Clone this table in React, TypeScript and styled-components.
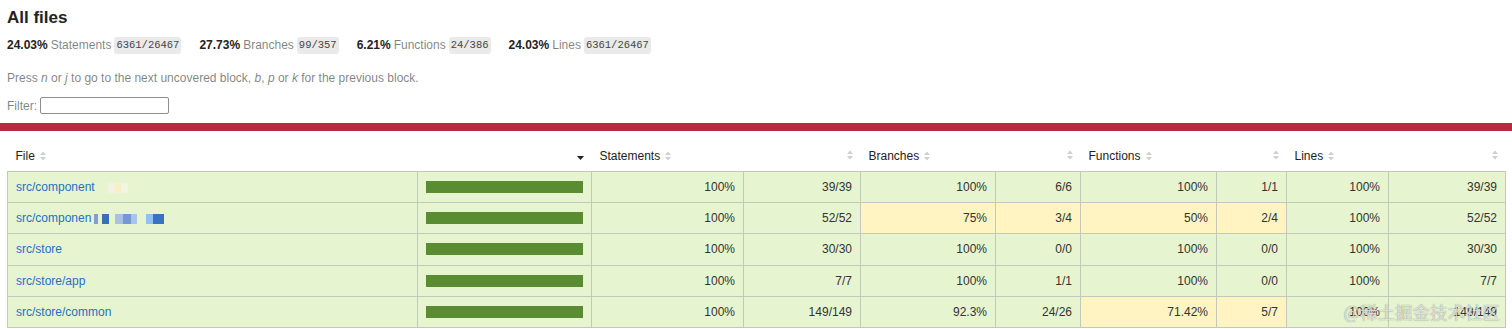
import styled, { createGlobalStyle } from 'styled-components';

const GlobalStyle = createGlobalStyle`
  html, body {
    margin: 0;
    background: #fff;
  }
  body {
    font-family: 'Liberation Sans', Arial, sans-serif;
    font-size: 12px;
    color: #333;
  }
`;

const Page = styled.div`
  position: relative;
  width: 1512px;
  height: 329px;
  overflow: hidden;
`;

const Intro = styled.div`
  padding: 8px 7px 0;
`;

const Title = styled.h1`
  margin: 0 0 9px;
  font-size: 17px;
  line-height: 20px;
  font-weight: bold;
  color: #222;
`;

const Summary = styled.div`
  display: flex;
  align-items: center;
  gap: 18px;
  height: 16px;
`;

const Stat = styled.div`
  display: flex;
  align-items: center;
  white-space: nowrap;
`;

const Strong = styled.span`
  font-weight: bold;
  color: #222;
  margin-right: 3px;
`;

const Quiet = styled.span`
  color: rgba(0, 0, 0, 0.5);
`;

const Fraction = styled.span`
  font-family: 'Liberation Mono', monospace;
  font-size: 10.5px;
  line-height: 13px;
  color: #444;
  background: #eaeaea;
  border-radius: 3px;
  padding: 2px;
  margin-left: 3px;
`;

const Help = styled.p`
  margin: 18px 0 0;
  line-height: 14px;
  color: rgba(0, 0, 0, 0.5);
`;

const FilterRow = styled.div`
  display: flex;
  align-items: center;
  gap: 3px;
  margin-top: 12px;
  height: 17px;
  color: rgba(0, 0, 0, 0.5);
`;

const FilterInput = styled.input`
  box-sizing: border-box;
  width: 129px;
  height: 17px;
  border: 1px solid #8e8e8e;
  border-radius: 2px;
  padding: 0 3px;
  background: #fff;
`;

const StatusLine = styled.div`
  margin-top: 9px;
  height: 8px;
  background: #b92a42;
`;

const TableWrap = styled.div`
  padding: 9px 7px 0;
`;

const Table = styled.table`
  width: 1498px;
  border-collapse: collapse;
  table-layout: fixed;
`;

const Th = styled.th<{ $align?: 'left' | 'right' }>`
  height: 31px;
  padding: 0 8px;
  font-weight: normal;
  color: #222;
  text-align: ${p => p.$align || 'left'};
  border-bottom: 1px solid #c2c8bb;
  white-space: nowrap;
`;

const HeadLabel = styled.span`
  display: inline-flex;
  align-items: center;
  gap: 5px;
  vertical-align: middle;
`;

const Td = styled.td<{ $tone: 'high' | 'medium'; $align?: 'left' | 'right' }>`
  height: 30.2px;
  padding: 0 8px;
  background: ${p => (p.$tone === 'high' ? '#e6f5d0' : '#fff4c2')};
  border: 1px solid #c2c8bb;
  text-align: ${p => p.$align || 'right'};
  color: #333;
  white-space: nowrap;
  overflow: hidden;
`;

const FileLink = styled.a`
  color: #1f6fc5;
  text-decoration: none;
`;

const Mosaic = styled.span`
  display: inline-flex;
  vertical-align: middle;
  height: 10px;
`;

const Tile = styled.span<{ $w: number; $c: string }>`
  width: ${p => p.$w}px;
  height: 10px;
  background: ${p => p.$c};
`;

const Cover = styled.div`
  height: 12px;
  background: #5a8c32;
`;

const Watermark = styled.div`
  position: absolute;
  right: 12px;
  top: 300px;
  font-family: 'Noto Sans CJK SC', sans-serif;
  font-size: 17.5px;
  line-height: 24px;
  color: rgba(255, 255, 255, 0.75);
  text-shadow: 0 0 1px rgba(0, 0, 0, 0.55);
  pointer-events: none;
`;

const SortIcon = () => (
  <svg width="6" height="10" viewBox="0 0 6 10">
    <path d="M0 4 L3 0.5 L6 4 Z M0 6 L3 9.5 L6 6 Z" fill="#cfcfcf" />
  </svg>
);

const SortedIcon = () => (
  <svg width="7" height="4" viewBox="0 0 7 4">
    <path d="M0 0 L7 0 L3.5 4 Z" fill="#222" />
  </svg>
);

type Tone = 'high' | 'medium';
type Metric = [string, string, Tone];

interface Row {
  file: string;
  mosaic?: [number, string][];
  s: Metric;
  b: Metric;
  f: Metric;
  l: Metric;
}

// blurred parts of the file names in the screenshot
const paleTiles: [number, string][] = [
  [13, 'transparent'],
  [7, '#f3f2e0'],
  [6, '#f8efc6'],
  [7, '#f1f5e2'],
];

const blueTiles: [number, string][] = [
  [3, 'transparent'],
  [4, '#7f9fcf'],
  [4, 'transparent'],
  [7, '#3d6fb6'],
  [6, 'transparent'],
  [8, '#a9c0e4'],
  [8, '#7598d4'],
  [6, '#a7c4ea'],
  [9, 'transparent'],
  [7, '#8ec3ee'],
  [11, '#3a72c2'],
];

const rows: Row[] = [
  {
    file: 'src/component',
    mosaic: paleTiles,
    s: ['100%', '39/39', 'high'],
    b: ['100%', '6/6', 'high'],
    f: ['100%', '1/1', 'high'],
    l: ['100%', '39/39', 'high'],
  },
  {
    file: 'src/componen',
    mosaic: blueTiles,
    s: ['100%', '52/52', 'high'],
    b: ['75%', '3/4', 'medium'],
    f: ['50%', '2/4', 'medium'],
    l: ['100%', '52/52', 'high'],
  },
  {
    file: 'src/store',
    s: ['100%', '30/30', 'high'],
    b: ['100%', '0/0', 'high'],
    f: ['100%', '0/0', 'high'],
    l: ['100%', '30/30', 'high'],
  },
  {
    file: 'src/store/app',
    s: ['100%', '7/7', 'high'],
    b: ['100%', '1/1', 'high'],
    f: ['100%', '0/0', 'high'],
    l: ['100%', '7/7', 'high'],
  },
  {
    file: 'src/store/common',
    s: ['100%', '149/149', 'high'],
    b: ['92.3%', '24/26', 'high'],
    f: ['71.42%', '5/7', 'medium'],
    l: ['100%', '149/149', 'high'],
  },
];

const colWidths = [410, 174, 152, 117, 135, 85, 136, 70, 102, 117];

const summary = [
  { pct: '24.03%', label: 'Statements', frac: '6361/26467' },
  { pct: '27.73%', label: 'Branches', frac: '99/357' },
  { pct: '6.21%', label: 'Functions', frac: '24/386' },
  { pct: '24.03%', label: 'Lines', frac: '6361/26467' },
];

const metricHeads = ['Statements', 'Branches', 'Functions', 'Lines'];

const MetricCells = ({ m }: { m: Metric }) => (
  <>
    <Td $tone={m[2]}>{m[0]}</Td>
    <Td $tone={m[2]}>{m[1]}</Td>
  </>
);

export default function App() {
  return (
    <Page>
      <GlobalStyle />
      <Intro>
        <Title>All files</Title>
        <Summary>
          {summary.map(s => (
            <Stat key={s.label}>
              <Strong>{s.pct}</Strong>
              <Quiet>{s.label}</Quiet>
              <Fraction>{s.frac}</Fraction>
            </Stat>
          ))}
        </Summary>
        <Help>
          Press <em>n</em> or <em>j</em> to go to the next uncovered block, <em>b</em>,{' '}
          <em>p</em> or <em>k</em> for the previous block.
        </Help>
        <FilterRow>
          Filter:
          <FilterInput type="search" />
        </FilterRow>
      </Intro>
      <StatusLine />
      <TableWrap>
        <Table>
          <colgroup>
            {colWidths.map((w, i) => (
              <col key={i} style={{ width: w }} />
            ))}
          </colgroup>
          <thead>
            <tr>
              <Th>
                <HeadLabel>
                  File <SortIcon />
                </HeadLabel>
              </Th>
              <Th $align="right">
                <SortedIcon />
              </Th>
              {metricHeads.map(h => [
                <Th key={h}>
                  <HeadLabel>
                    {h} <SortIcon />
                  </HeadLabel>
                </Th>,
                <Th key={h + '-raw'} $align="right">
                  <SortIcon />
                </Th>,
              ])}
            </tr>
          </thead>
          <tbody>
            {rows.map(r => (
              <tr key={r.file}>
                <Td $tone="high" $align="left">
                  <FileLink href="#">{r.file}</FileLink>
                  {r.mosaic && (
                    <Mosaic>
                      {r.mosaic.map(([w, c], i) => (
                        <Tile key={i} $w={w} $c={c} />
                      ))}
                    </Mosaic>
                  )}
                </Td>
                <Td $tone="high" $align="left">
                  <Cover />
                </Td>
                <MetricCells m={r.s} />
                <MetricCells m={r.b} />
                <MetricCells m={r.f} />
                <MetricCells m={r.l} />
              </tr>
            ))}
          </tbody>
        </Table>
      </TableWrap>
      <Watermark>@稀土掘金技术社区</Watermark>
    </Page>
  );
}
